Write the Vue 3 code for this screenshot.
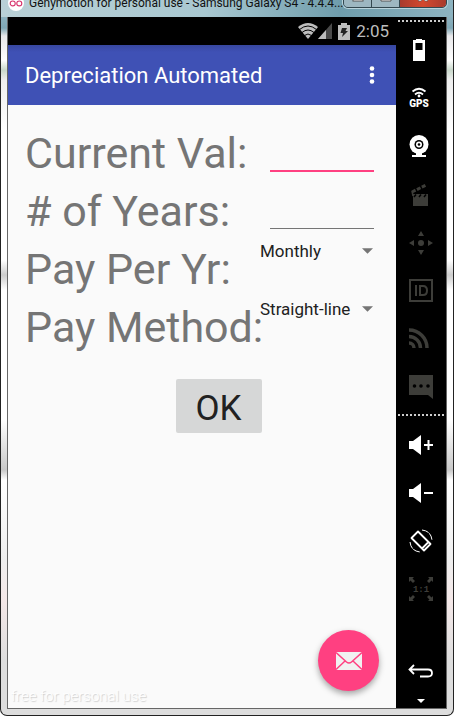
<template>
  <div class="window">
    <header class="title-bar">
      <svg class="logo" viewBox="0 0 18 18" aria-hidden="true">
        <circle cx="9" cy="9" r="9" fill="#fff" />
        <circle cx="5.3" cy="9.500" r="2.800" fill="none" stroke="#d7336c" stroke-width="1.300" />
        <circle cx="12.700" cy="9.500" r="2.800" fill="none" stroke="#d7336c" stroke-width="1.300" />
      </svg>
      <span class="title-text">Genymotion for personal use - Samsung Galaxy S4 - 4.4.4...</span>
      <div class="title-controls">
        <button type="button" aria-label="Minimize">
          <svg viewBox="0 0 12 10"><rect x="1" y="4" width="10" height="4" fill="#fff" stroke="#555" /></svg>
        </button>
        <button type="button" aria-label="Maximize">
          <svg viewBox="0 0 12 10"><path d="M1 1h10v7H1zM4 4h4v1H4z" fill="#fff" stroke="#555" fill-rule="evenodd" /></svg>
        </button>
        <button type="button" class="close" aria-label="Close">
          <svg viewBox="0 0 12 10"><path d="M1 0h3l2 3 2-3h3L8 4l3 4H8L6 6 4 8H1l3-4z" fill="#fff" stroke="#555" stroke-width=".6" /></svg>
        </button>
      </div>
    </header>

    <div class="device">
      <main class="screen">
        <div class="status-bar">
          <svg class="wifi" viewBox="0 0 20 16" aria-hidden="true">
            <path d="M10 16L0 4Q10-4 20 4z" fill="#bdbdbd" />
            <path d="M1.500 6.500Q10-.5 18.500 6.500M4 9.500Q10 4.500 16 9.500M6.500 12.500Q10 9.500 13.500 12.500" fill="none" stroke="#000" stroke-width="1" />
          </svg>
          <svg class="signal" viewBox="0 0 14 16" aria-hidden="true">
            <path d="M0 16L14 0v16z" fill="#4a4a4a" />
            <path d="M0 16L8 6.900V16z" fill="#bdbdbd" />
          </svg>
          <svg class="battery" viewBox="0 0 12 17" aria-hidden="true">
            <path d="M0 2h3V0h6v2h3v15H0z" fill="#bdbdbd" />
            <path d="M4 5h5L7.500 8H10l-6 6 1-4H2.500z" fill="#222" />
          </svg>
          <span class="clock">2:05</span>
        </div>

        <div class="app-bar">
          <h1>Depreciation Automated</h1>
          <button type="button" class="more" aria-label="More options">
            <svg viewBox="0 0 6 18">
              <circle cx="3" cy="2.500" r="2.300" />
              <circle cx="3" cy="9" r="2.300" />
              <circle cx="3" cy="15.500" r="2.300" />
            </svg>
          </button>
        </div>

        <form class="form" @submit.prevent>
          <div class="row">
            <label for="current-val">Current Val:</label>
            <input id="current-val" v-model="currentVal" class="active" type="text" />
          </div>
          <div class="row">
            <label for="years"># of Years:</label>
            <input id="years" v-model="years" type="text" />
          </div>
          <div v-for="item in selects" :key="item.id" class="row">
            <label :for="item.id">{{ item.label }}</label>
            <div class="spinner">
              <select :id="item.id" v-model="item.value">
                <option v-for="opt in item.options" :key="opt">{{ opt }}</option>
              </select>
              <svg viewBox="0 0 12 6" aria-hidden="true"><path d="M0 0h12L6 6z" fill="#757575" /></svg>
            </div>
          </div>
          <button type="submit" class="ok">OK</button>
        </form>

        <footer class="bottom">
          <span class="watermark">free for personal use</span>
          <button type="button" class="fab" aria-label="Email">
            <svg viewBox="0 0 26 18">
              <rect width="26" height="18" fill="#f1f1f1" />
              <path d="M0 .5L10.500 10Q13 12 15.500 10L26 .5M0 17.500L9 9M26 17.500L17 9" fill="none" stroke="#ff4081" stroke-width="1.500" />
            </svg>
          </button>
        </footer>
      </main>

      <aside class="toolbar">
        <div class="dots"></div>
        <button type="button" aria-label="Battery">
          <svg viewBox="0 0 30 30"><path d="M7 5h3V4h6v1h3v21H7zM9.500 8v7h7V8z" fill="#fff" fill-rule="evenodd" /></svg>
        </button>
        <button type="button" aria-label="GPS">
          <svg viewBox="0 0 30 30">
            <path d="M6.500 8.500Q13 3 19.500 8.500M9 11.500Q13 8 17 11.500" fill="none" stroke="#fff" stroke-width="1.800" />
            <circle cx="13" cy="13" r="1.400" fill="#fff" />
            <text class="gps" x="13" y="24" text-anchor="middle" fill="#fff">GPS</text>
          </svg>
        </button>
        <button type="button" aria-label="Camera">
          <svg viewBox="0 0 30 30" fill="#fff">
            <circle cx="13" cy="13.500" r="9.500" />
            <circle cx="13" cy="13.500" r="4.500" fill="#000" />
            <circle cx="13" cy="13.500" r="3" />
            <circle cx="13" cy="13.500" r="1.300" fill="#000" />
            <path d="M10 22h6v2h4v2H6v-2h4z" />
          </svg>
        </button>
        <button type="button" aria-label="Capture">
          <svg viewBox="0 0 30 30">
            <path d="M7 15h15v12H7z" fill="#3d3d39" />
            <path d="M6 13L20 6" stroke="#3d3d39" stroke-width="3" stroke-dasharray="4 1.500" />
            <path d="M6 12l1 5" stroke="#3d3d39" stroke-width="1.500" />
            <path d="M8 18l2-2.500M13 18l2-2.500M18 18l2-2.500" stroke="#000" stroke-width="1.500" />
          </svg>
        </button>
        <button type="button" aria-label="Remote control">
          <svg viewBox="0 0 30 30" fill="#3d3d39">
            <circle cx="15" cy="16" r="3" />
            <path d="M12 9l3-5 3 5zM12 23h6l-3 5zM8 13v6l-5-3zM22 13l5 3-5 3z" />
          </svg>
        </button>
        <button type="button" aria-label="Identifiers">
          <svg viewBox="0 0 30 30" fill="none" stroke="#3d3d39" stroke-width="2">
            <rect x="4" y="5" width="22" height="21" />
            <path d="M10 10v11M14 11v9h3q4 0 4-4.500t-4-4.500z" />
          </svg>
        </button>
        <button type="button" aria-label="Network">
          <svg viewBox="0 0 30 30" fill="none" stroke="#3d3d39">
            <path d="M3 7a18 18 0 0 1 18 18M3 13.500a11.500 11.500 0 0 1 11.500 11.500" stroke-width="3.500" />
            <path d="M3 20a5 5 0 0 1 5 5" stroke-width="3.500" />
          </svg>
        </button>
        <button type="button" aria-label="Messages">
          <svg viewBox="0 0 30 30">
            <path d="M3 4h24v24l-5-4H3z" fill="#3d3d39" />
            <circle cx="8.500" cy="15" r="1.800" /><circle cx="15" cy="15" r="1.800" /><circle cx="22" cy="15" r="1.800" />
          </svg>
        </button>
        <div class="dots second"></div>
        <button type="button" aria-label="Volume up">
          <svg viewBox="0 0 30 30"><path d="M3 11h4l8-6v20l-8-6H3zM18 14h3.500v-4h2v4H27v2h-3.500v4h-2v-4H18z" fill="#fff" /></svg>
        </button>
        <button type="button" aria-label="Volume down">
          <svg viewBox="0 0 30 30"><path d="M3 11h4l8-6v20l-8-6H3zM18 14h9v2h-9z" fill="#fff" /></svg>
        </button>
        <button type="button" aria-label="Rotate">
          <svg viewBox="0 0 30 30" fill="none" stroke="#fff">
            <path d="M12 5.500L5.500 12 18 24.500 24.500 18zM16 22.500l6.500-6.500" stroke-width="1.800" stroke-linejoin="round" />
            <path d="M16 4q9 1 10 10M4 16q1 9 10 10" stroke-dasharray="7 1" />
          </svg>
        </button>
        <button type="button" class="scale" aria-label="Pixel perfect">
          <svg viewBox="0 0 30 30" fill="#3d3d39">
            <path d="M3 3h5L6.500 4.500 9 7 7 9 4.500 6.500 3 8zM27 3v5l-1.500-1.500L23 9l-2-2 2.500-2.500L22 3zM3 27v-5l1.500 1.500L7 21l2 2-2.500 2.500L8 27zM27 27h-5l1.500-1.500L21 23l2-2 2.500 2.500L27 22z" />
            <text x="15" y="18" text-anchor="middle">1:1</text>
          </svg>
        </button>
        <button type="button" class="back" aria-label="Back">
          <svg viewBox="0 0 30 30" fill="none" stroke="#fff" stroke-width="1.800">
            <path d="M8 10l-4.500 4.500L8 19M3.500 14.500H22q4 0 4 3.500t-4 3.500h-8" />
          </svg>
        </button>
        <button type="button" class="down" aria-label="More">
          <svg viewBox="0 0 8 4"><path d="M0 0h8L4 4z" fill="#fff" /></svg>
        </button>
      </aside>
    </div>
  </div>
</template>

<script setup>
import { ref } from 'vue';

const currentVal = ref('');
const years = ref('');
const selects = ref([
  { id: 'pay-per-yr', label: 'Pay Per Yr:', value: 'Monthly', options: ['Monthly', 'Yearly'] },
  { id: 'pay-method', label: 'Pay Method:', value: 'Straight-line', options: ['Straight-line', 'Declining'] }
]);
</script>

<style>
body {
  margin: 0;
  background: #fff;
}
</style>

<style scoped>
* {
  box-sizing: border-box;
}

button {
  padding: 0;
  border: 0;
  background: none;
}

svg {
  display: block;
}

.window {
  display: flex;
  flex-direction: column;
  min-height: 100vh;
  margin-right: 10px;
  padding: 0 6px 6px;
  border: 1px solid #222;
  border-top: 0;
  border-radius: 0 0 7px 7px;
  background: linear-gradient(#9fc0cb 0, #7fa7b5 28px, #e8e8ea 36px, #fff 60px, #c9d8cb 70px, #eee 80px, #fff 130px, #fff 260px, #ccc 275px, #fff 290px, #fff 420px, #c8c8c8 470px, #fff 480px, #eee 560px, #f4e8e8 600px, #ddd 660px, #ddd 100%);
  overflow: hidden;
}

/* the upper part of the bar is above the window edge */
.title-bar {
  display: flex;
  align-items: center;
  height: 28px;
  margin: -11px -6px 0;
  padding: 0 6px 0 7px;
  background: linear-gradient(90deg, #b9d0d6, #a9c8d1 45%, #6f9dac 75%, #8db3c0);
}

.logo {
  flex-shrink: 0;
  width: 16px;
  height: 16px;
  margin-right: 5px;
}

.title-text {
  flex: 1;
  min-width: 0;
  font-family: Roboto, sans-serif;
  font-size: 12px;
  color: #111;
  white-space: nowrap;
}

.title-controls {
  display: flex;
  flex-shrink: 0;
  height: 19px;
  align-self: flex-start;
  border: 1px solid #334850;
  border-radius: 0 0 5px 5px;
  box-shadow: 0 0 0 1px #b9d3db;
  overflow: hidden;
}

.title-controls button {
  display: flex;
  align-items: flex-end;
  justify-content: center;
  width: 28px;
  padding-bottom: 4px;
  border-right: 1px solid #334850;
  background: #9db7c1;
}

.title-controls .close {
  width: 46px;
  border-right: 0;
  background: linear-gradient(90deg, #a83a2c, #d4492f, #a83a2c);
}

.title-controls svg {
  width: 12px;
  height: 10px;
}

.device {
  display: flex;
  flex: 1;
  border: 1px solid #666;
  border-width: 0 1px 1px;
  background: #000;
}

.screen {
  display: flex;
  flex: 1;
  flex-direction: column;
  min-width: 0;
  background: #fafafa;
  font-family: Roboto, sans-serif;
}

.status-bar {
  display: flex;
  align-items: center;
  justify-content: flex-end;
  height: 28px;
  padding-right: 7px;
  background: #000;
}

.wifi {
  width: 20px;
  height: 16px;
}

.signal {
  width: 14px;
  height: 16px;
  margin-right: 6px;
}

.battery {
  width: 12px;
  height: 17px;
  margin-right: 6px;
}

.clock {
  font-size: 17px;
  color: #bdbdbd;
}

.app-bar {
  display: flex;
  align-items: center;
  justify-content: space-between;
  height: 60px;
  padding: 0 21px 0 17px;
  background: linear-gradient(#3747a0, #3f51b5 7px);
}

.app-bar h1 {
  margin: 0;
  font-size: 22px;
  font-weight: 400;
  color: #fff;
}

.more svg {
  width: 6px;
  height: 18px;
  fill: #fff;
}

.form {
  display: flex;
  flex-direction: column;
  padding: 19px 22px 0 17px;
}

.row {
  display: flex;
  align-items: flex-start;
  justify-content: space-between;
  height: 58px;
}

.row label {
  flex: 1;
  width: 0;
  font-size: 43px;
  line-height: 58px;
  color: #757575;
  white-space: nowrap;
}

.row input {
  box-sizing: content-box;
  width: 104px;
  height: 46px;
  padding: 0;
  border: 0;
  border-bottom: 1px solid #757575;
  background: none;
  font: 17px Roboto, sans-serif;
  outline: none;
}

.row input.active {
  border-bottom: 2px solid #ff4081;
}

.spinner {
  display: flex;
  align-items: center;
  position: relative;
  width: 114px;
}

.spinner select {
  width: 100%;
  height: 22px;
  padding: 0;
  border: 0;
  background: none;
  appearance: none;
  font: 17px Roboto, sans-serif;
  color: #212121;
}

.spinner svg {
  position: absolute;
  right: 1px;
  width: 11px;
  height: 6px;
  pointer-events: none;
}

.ok {
  align-self: center;
  width: 86px;
  height: 54px;
  margin: 23px 0 0 38px;
  padding-top: 4px;
  border-radius: 2px;
  background: #d6d7d7;
  font: 35px Roboto, sans-serif;
  color: #212121;
}

.bottom {
  display: flex;
  align-items: flex-end;
  justify-content: space-between;
  margin-top: auto;
  padding: 0 17px 0 3px;
}

.watermark {
  font-size: 15px;
  font-weight: 300;
  line-height: 24px;
  color: #fff;
  text-shadow: 1px 1px 1px #ccc;
}

.fab {
  display: flex;
  align-items: center;
  justify-content: center;
  width: 61px;
  height: 61px;
  margin-bottom: 17px;
  border-radius: 50%;
  background: #ff4081;
  box-shadow: 0 3px 6px rgba(0, 0, 0, 0.35);
}

.fab svg {
  width: 26px;
  height: 18px;
}

.toolbar {
  display: flex;
  flex-direction: column;
  width: 50px;
}

.toolbar button {
  display: flex;
  align-items: center;
  justify-content: center;
  height: 48px;
}

.toolbar svg {
  width: 30px;
  height: 30px;
}

.dots {
  height: 2px;
  margin: 3px 2px 4px;
  background: repeating-linear-gradient(90deg, #ccc 0 2px, #000 2px 4px);
}

.dots.second {
  margin: 4px 2px 5px;
}

.gps {
  font: 900 10px Roboto, sans-serif;
}

.scale text {
  font: 700 9px "Liberation Mono", monospace;
}

.toolbar .back {
  margin-top: auto;
}

.toolbar .down {
  height: 14px;
}

.toolbar .down svg {
  width: 8px;
  height: 4px;
}
</style>
